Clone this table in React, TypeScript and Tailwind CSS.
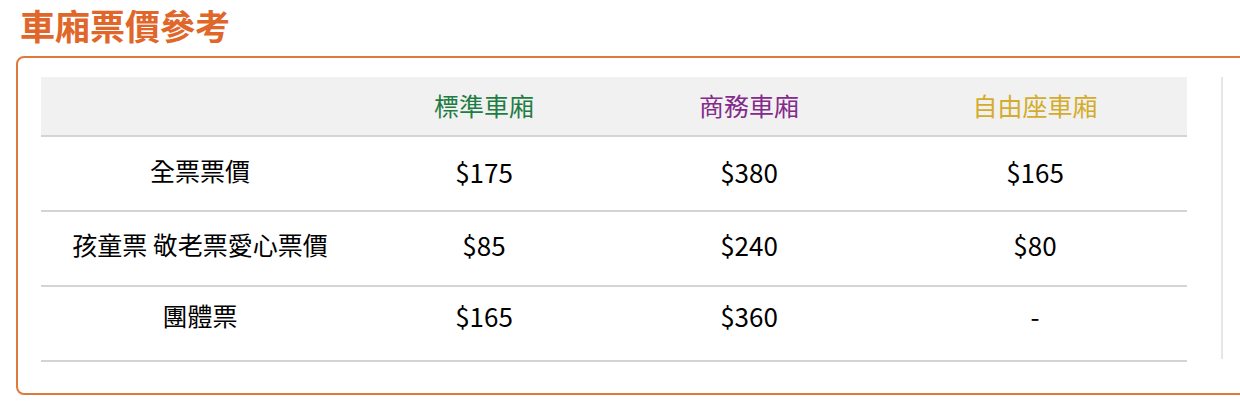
import React from "react";

const rows = [
  { c: ["全票票價", "$175", "$380", "$165"], pb: "pb-[5px]" },
  { c: ["孩童票 敬老票愛心票價", "$85", "$240", "$80"], pb: "pb-[8px]" },
  { c: ["團體票", "$165", "$360", "-"], pb: "pb-[16px]" },
];

export default function App() {
  return (
    <div className="w-[1240px] h-[409px] bg-white overflow-hidden" style={{ fontFamily: '"Noto Sans CJK TC", "Noto Sans", sans-serif' }}>
      <h2 className="pl-[20px] h-[56px] text-[35px] leading-[50px] font-bold text-[#e0662a]">
        車廂票價參考
      </h2>
      <div className="ml-[16px] w-[1260px] h-[339px] border-2 border-[#e07a3a] rounded-[8px] pt-[19px] pl-[23px] flex">
        <div className="w-[1146px]">
          <div className="flex h-[60px] bg-[#f1f1f1] border-b-2 border-[#d4d4d4] text-[25px] items-center">
            <div className="w-[318px]"></div>
            <div className="w-[250px] text-center text-[#1f7d44]">標準車廂</div>
            <div className="w-[280px] text-center text-[#832a8c]">商務車廂</div>
            <div className="w-[298px] pr-[6px] text-center text-[#d4ac2c]">自由座車廂</div>
          </div>
          {rows.map((r, i) => (
            <div key={i} className={`flex h-[75px] ${r.pb} border-b-2 border-[#d4d4d4] items-center text-[25px] text-black`}>
              <div className="w-[318px] text-center">{r.c[0]}</div>
              <div className="w-[250px] text-center text-[26px]">{r.c[1]}</div>
              <div className="w-[280px] text-center text-[26px]">{r.c[2]}</div>
              <div className="w-[298px] pr-[6px] text-center text-[26px]">{r.c[3]}</div>
            </div>
          ))}
        </div>
        <div className="ml-[34px] w-[2px] h-[282px] bg-[#e6e6e6]"></div>
      </div>
    </div>
  );
}
